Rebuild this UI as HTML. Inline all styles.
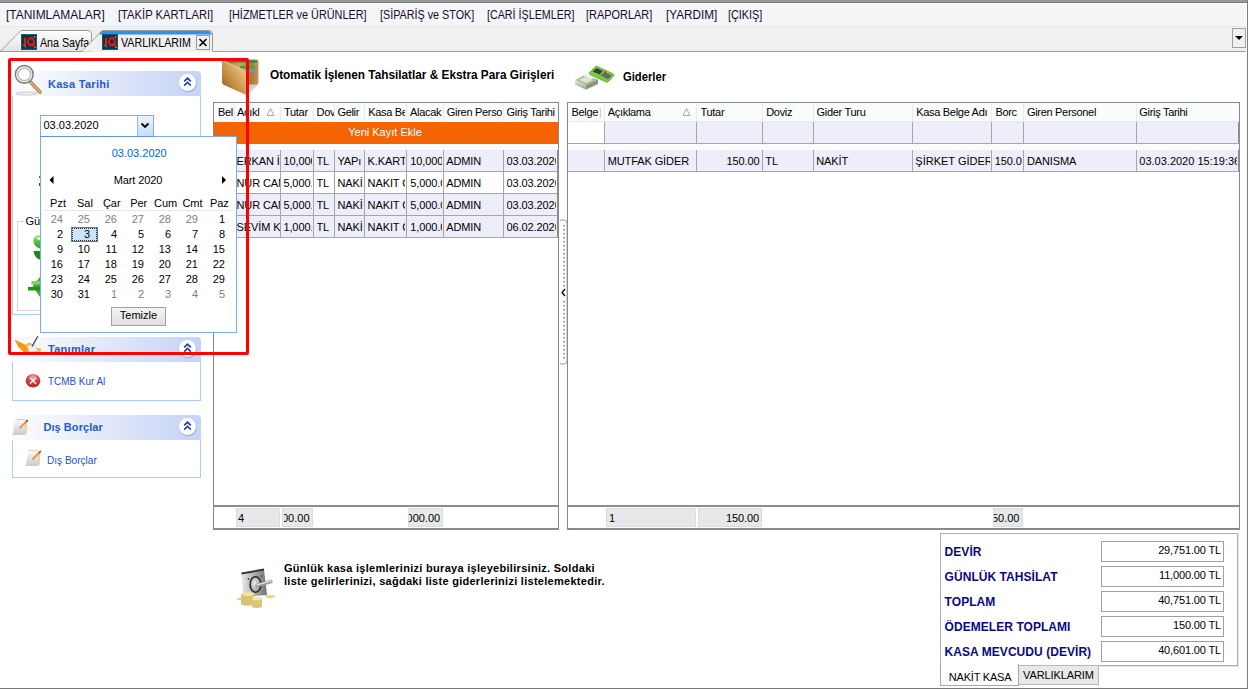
<!DOCTYPE html>
<html><head><meta charset="utf-8">
<style>
*{margin:0;padding:0;box-sizing:border-box}
html,body{width:1248px;height:689px;overflow:hidden;background:#fff;font-family:"Liberation Sans",sans-serif;font-size:11px;color:#000}
.a{position:absolute}
.t{position:absolute;white-space:nowrap;font-size:11px;line-height:13px}
.t12{position:absolute;white-space:nowrap;font-size:12px;line-height:14px}
.b{font-weight:bold}
.hl{position:absolute;height:1px}
.vl{position:absolute;width:1px}
</style></head><body>
<!-- window borders -->
<div class="a" style="left:0;top:0;width:1248px;height:2px;background:#999"></div>
<div class="a" style="left:0;top:2px;width:1248px;height:1px;background:#7c7c7c"></div>
<div class="a" style="left:1247px;top:0;width:1px;height:689px;background:#7c7c7c"></div>
<div class="a" style="left:0;top:688px;width:1248px;height:1px;background:#777"></div>
<!-- menu bar -->
<div class="a" style="left:0;top:3px;width:1246px;height:1px;background:#fff"></div>
<div class="a" style="left:0;top:4px;width:1246px;height:22px;background:#f4f5f7"></div>
<div class="a" style="left:0;top:26px;width:1246px;height:25px;background:#f0f0f0"></div>
<div class="a" style="left:0;top:51px;width:1246px;height:1px;background:#a0a0a0"></div>
<div class="a" style="left:0;top:26px;width:1246px;height:1px;background:#e6e7e9"></div>
<div id="menu" style="color:#1a0a30">
<div class="t12" style="left:6.2px;top:8.2px;transform:scaleX(0.996);transform-origin:0 0">[TANIMLAMALAR]</div>
<div class="t12" style="left:117.8px;top:8.2px;transform:scaleX(0.933);transform-origin:0 0">[TAKİP KARTLARI]</div>
<div class="t12" style="left:228.9px;top:8.2px;transform:scaleX(0.905);transform-origin:0 0">[HİZMETLER ve ÜRÜNLER]</div>
<div class="t12" style="left:379.9px;top:8.2px;transform:scaleX(0.898);transform-origin:0 0">[SİPARİŞ ve STOK]</div>
<div class="t12" style="left:486.7px;top:8.2px;transform:scaleX(0.893);transform-origin:0 0">[CARİ İŞLEMLER]</div>
<div class="t12" style="left:586.4px;top:8.2px;transform:scaleX(0.912);transform-origin:0 0">[RAPORLAR]</div>
<div class="t12" style="left:665.5px;top:8.2px;transform:scaleX(0.977);transform-origin:0 0">[YARDIM]</div>
<div class="t12" style="left:728.0px;top:8.2px;transform:scaleX(0.903);transform-origin:0 0">[ÇIKIŞ]</div>
</div>
<!-- tabs -->
<div class="a" style="left:82px;top:51px;width:131px;height:1px;background:#f0f0f0"></div>
<svg class="a" style="left:0;top:26px" width="260" height="27">
<defs><linearGradient id="tg" x1="0" y1="0" x2="0" y2="1"><stop offset="0" stop-color="#ffffff"/><stop offset="1" stop-color="#e3e3e3"/></linearGradient></defs>
<path d="M0,25.5 L21,4.5 L88,4.5 Q91.5,4.5 91.5,8 L91.5,25.5 Z" fill="url(#tg)" stroke="#9a9a9a" stroke-width="1"/>
<path d="M82,25.5 L102.5,4.5 L209,4.5 Q212.5,4.5 212.5,8 L212.5,25.5" fill="#f0f0f0" stroke="#9a9a9a" stroke-width="1"/>
<path d="M101,5 L209,5 L212,8 L212,8.5 L98,8.5 Z" fill="#2b90ef"/>
</svg>
<svg class="a" style="left:21px;top:34px" width="16" height="16">
<rect x="0.5" y="0.5" width="15" height="15" fill="#0f3444" stroke="#1a5a70"/>
<rect x="3" y="4" width="2" height="8" fill="#ff1010"/>
<ellipse cx="10" cy="7.8" rx="3" ry="3.6" fill="none" stroke="#ff1010" stroke-width="1.8"/>
<path d="M10.5,9.5 L14,12.3" stroke="#ff1010" stroke-width="1.8"/>
<path d="M2,10.5 L5,13.5" stroke="#60a888" stroke-width="1"/>
<circle cx="13.5" cy="3" r="0.8" fill="#c0a870"/><circle cx="14" cy="13.5" r="0.8" fill="#c0a870"/>
</svg>
<div class="t12" style="left:40px;top:36px;transform:scaleX(0.89);transform-origin:0 0">Ana Sayfa</div>
<svg class="a" style="left:0;top:26px" width="110" height="27"><path d="M82,25.5 L102.5,4.5" stroke="#9a9a9a" stroke-width="1" fill="none"/><path d="M82,25.5 L100,7.5 L100,25.5 Z" fill="#f0f0f0"/></svg>
<svg class="a" style="left:102px;top:34px" width="16" height="16">
<rect x="0.5" y="0.5" width="15" height="15" fill="#0f3444" stroke="#1a5a70"/>
<rect x="3" y="4" width="2" height="8" fill="#ff1010"/>
<ellipse cx="10" cy="7.8" rx="3" ry="3.6" fill="none" stroke="#ff1010" stroke-width="1.8"/>
<path d="M10.5,9.5 L14,12.3" stroke="#ff1010" stroke-width="1.8"/>
<path d="M2,10.5 L5,13.5" stroke="#60a888" stroke-width="1"/>
<circle cx="13.5" cy="3" r="0.8" fill="#c0a870"/><circle cx="14" cy="13.5" r="0.8" fill="#c0a870"/>
</svg>
<div class="t12" style="left:121px;top:36px;transform:scaleX(0.89);transform-origin:0 0">VARLIKLARIM</div>
<div class="a" style="left:196px;top:35px;width:14px;height:15px;border:1px solid #9a9a9a;background:#f2f2f2"></div>
<svg class="a" style="left:196px;top:35px" width="14" height="15"><path d="M3.5,4 L10.5,11 M10.5,4 L3.5,11" stroke="#000" stroke-width="1.6"/></svg>
<div class="a" style="left:1232px;top:28px;width:14px;height:20px;border:1px solid #a0a0a0;background:#f0f0f0"></div>
<svg class="a" style="left:1232px;top:28px" width="14" height="20"><path d="M3,8 L11,8 L7,12 Z" fill="#000"/></svg>
<!-- LEFT PANEL -->
<style>
.ph{position:absolute;left:12px;width:189px;height:25px;background:linear-gradient(to right,#fdfdff 0%,#e4eaf9 45%,#c6d3f7 100%);border-radius:0 4px 0 0}
.pb{position:absolute;left:12px;width:189px;background:#fff;border:1px solid #a8cdf8;border-top:none}
.pht{position:absolute;white-space:nowrap;font-size:11px;line-height:13px;font-weight:bold;color:#215dc6}
.cb{position:absolute;width:17px;height:17px;border-radius:50%;background:radial-gradient(circle at 50% 45%,#ffffff 60%,#eef0f6 78%,#b4bccf 100%);box-shadow:0.5px 1px 1.5px rgba(60,70,100,0.35)}
.pit{position:absolute;white-space:nowrap;font-size:11px;line-height:13px;color:#2151c9}
</style>
<!-- Kasa Tarihi -->
<div class="ph" style="top:71px"></div>
<div class="pb" style="top:96px;height:219px"></div>
<svg class="a" style="left:14px;top:63px" width="30" height="34">
<defs><radialGradient id="mg" cx="0.45" cy="0.45" r="0.6"><stop offset="0" stop-color="#ffffff"/><stop offset="0.6" stop-color="#f4f4f4"/><stop offset="1" stop-color="#d0d0d0"/></radialGradient></defs>
<ellipse cx="12.5" cy="30.5" rx="11" ry="1.6" fill="#ececec" stroke="#c4c4c4" stroke-width="0.8"/>
<path d="M17,19.5 L26,29" stroke="#a87a3a" stroke-width="3.4" stroke-linecap="round"/>
<path d="M17,19.5 L26,29" stroke="#e3b878" stroke-width="1.6" stroke-linecap="round"/>
<circle cx="10.3" cy="11.4" r="8.9" fill="url(#mg)" stroke="#7a7a7a" stroke-width="1.4"/>
<circle cx="10.3" cy="11.4" r="6.2" fill="#fff" stroke="#b8b8b8" stroke-width="1.2"/>
</svg>
<div class="pht" style="left:48px;top:78.2px;letter-spacing:0.28px">Kasa Tarihi</div>
<div class="cb" style="left:179px;top:74px"></div>
<svg class="a" style="left:179px;top:74px" width="17" height="17"><path d="M5.2,7.4 L8.5,4.1 L11.8,7.4 M5.2,11.6 L8.5,8.3 L11.8,11.6" stroke="#1a3a9a" stroke-width="1.6" fill="none"/></svg>
<!-- date edit -->
<div class="a" style="left:40px;top:115px;width:114px;height:22px;border:1px solid #7ab0ea;background:#fff"></div>
<div class="a" style="left:137px;top:116px;width:16px;height:20px;background:linear-gradient(#e9f3fd,#c6def7);border-left:1px solid #8fbdee"></div>
<svg class="a" style="left:137px;top:116px" width="16" height="20"><path d="M4.5,7.5 L8,11 L11.5,7.5" stroke="#000" stroke-width="1.8" fill="none"/></svg>
<div class="t" style="left:43.5px;top:118.7px">03.03.2020</div>
<!-- hidden controls below popup -->
<div class="a" style="left:38.5px;top:176px;width:1.5px;height:1.5px;background:#555"></div>
<div class="a" style="left:38.5px;top:183px;width:1.5px;height:2.5px;background:#444"></div>
<div class="a" style="left:17px;top:221px;width:40px;height:90px;border:1px solid #d5d5d5;border-right:none"></div>
<div class="a" style="left:24px;top:214px;width:17px;height:14px;background:#fff"></div>
<div class="t" style="left:25.5px;top:215px">Gü</div>
<svg class="a" style="left:24px;top:228px" width="16" height="72">
<defs><linearGradient id="gg" x1="0" y1="0" x2="0" y2="1"><stop offset="0" stop-color="#a0e890"/><stop offset="0.5" stop-color="#5cc040"/><stop offset="1" stop-color="#2a9a18"/></linearGradient></defs>
<path d="M16,7 C11,7 9,10 9.5,14 C10,17.5 13,19.5 16,20.5 Z" fill="url(#gg)"/>
<path d="M12.5,10 C13.5,9 15,9 16,9.5 L16,12 C14.5,11.5 13,11.5 12.5,10 Z" fill="#e8f8e0"/>
<path d="M9.5,23 L16,23 L16,31.5 C12.5,31 10,27.5 9.5,23 Z" fill="#1e8c10"/>
<path d="M16,49 L8.5,58 L16,69 Z" fill="#3cae24"/>
<rect x="7.5" y="53" width="8.5" height="3.5" fill="#7cd468"/>
<rect x="4" y="59" width="12" height="3.5" fill="#22901a"/>
</svg>
<!-- Tanimlar -->
<div class="ph" style="top:337px"></div>
<div class="pb" style="top:362px;height:39px"></div>
<svg class="a" style="left:10px;top:334px" width="36" height="30">
<path d="M4.5,5.5 L16,11 L19,18 L14,18.5 L8,12.5 Z" fill="#f49a18"/>
<path d="M15,11 L19,8.5 L22,10 L27,14 L30.5,14.5 Q32,16 30,17.5 L20,19 Z" fill="#f8ac30"/>
<path d="M17,11.5 L25,10.5 L28,17 L19.5,18 Z" fill="#e8f0f8" stroke="#c0ccd8" stroke-width="0.6"/>
<path d="M22,12.5 L27.8,2.2" stroke="#404040" stroke-width="1.3"/>
</svg>
<div class="pht" style="left:48px;top:343.3px;letter-spacing:0.28px">Tanımlar</div>
<div class="cb" style="left:179px;top:340px"></div>
<svg class="a" style="left:179px;top:340px" width="17" height="17"><path d="M5.2,7.4 L8.5,4.1 L11.8,7.4 M5.2,11.6 L8.5,8.3 L11.8,11.6" stroke="#1a3a9a" stroke-width="1.6" fill="none"/></svg>
<svg class="a" style="left:20px;top:368px" width="26" height="26">
<defs><radialGradient id="rx" cx="0.5" cy="0.25" r="0.8"><stop offset="0" stop-color="#f4b0b0"/><stop offset="0.45" stop-color="#d84848"/><stop offset="1" stop-color="#a82020"/></radialGradient></defs>
<ellipse cx="13" cy="12.8" rx="7.4" ry="6.8" fill="url(#rx)"/>
<path d="M10,9.8 L16,15.8 M16,9.8 L10,15.8" stroke="#fff" stroke-width="1.3"/>
</svg>
<div class="pit" style="left:48px;top:375.4px;transform:scaleX(0.9);transform-origin:0 0">TCMB Kur Al</div>
<!-- Dis Borclar -->
<div class="ph" style="top:415px"></div>
<div class="pb" style="top:440px;height:38px"></div>
<svg class="a" style="left:10px;top:416px" width="20" height="22">
<defs><linearGradient id="np10" x1="0" y1="0" x2="0" y2="1"><stop offset="0" stop-color="#f8f8f8"/><stop offset="1" stop-color="#c8ccd0"/></linearGradient></defs>
<path d="M15,5 L17,5.5 L16.8,17.5 L15,19 Z" fill="#e8d49a"/>
<path d="M5.5,4 L15,4 L15,19 L2.5,19 Q3.5,15 4,10 Z" fill="url(#np10)"/>
<path d="M5.5,3.6 L15,3.6" stroke="#e8d08a" stroke-width="1"/>
<path d="M9.5,12.5 L16.8,5" stroke="#f09040" stroke-width="1.8"/>
<path d="M16,5.8 L17.8,4" stroke="#d04040" stroke-width="1.8"/>
</svg>
<div class="pht" style="left:43.5px;top:421.2px;letter-spacing:0.05px">Dış Borçlar</div>
<div class="cb" style="left:179px;top:418px"></div>
<svg class="a" style="left:179px;top:418px" width="17" height="17"><path d="M5.2,7.4 L8.5,4.1 L11.8,7.4 M5.2,11.6 L8.5,8.3 L11.8,11.6" stroke="#1a3a9a" stroke-width="1.6" fill="none"/></svg>
<svg class="a" style="left:23px;top:447px" width="20" height="22">
<defs><linearGradient id="np23" x1="0" y1="0" x2="0" y2="1"><stop offset="0" stop-color="#f8f8f8"/><stop offset="1" stop-color="#c8ccd0"/></linearGradient></defs>
<path d="M15,5 L17,5.5 L16.8,17.5 L15,19 Z" fill="#e8d49a"/>
<path d="M5.5,4 L15,4 L15,19 L2.5,19 Q3.5,15 4,10 Z" fill="url(#np23)"/>
<path d="M5.5,3.6 L15,3.6" stroke="#e8d08a" stroke-width="1"/>
<path d="M9.5,12.5 L16.8,5" stroke="#f09040" stroke-width="1.8"/>
<path d="M16,5.8 L17.8,4" stroke="#d04040" stroke-width="1.8"/>
</svg>
<div class="pit" style="left:47.3px;top:453.7px;transform:scaleX(0.915);transform-origin:0 0">Dış Borçlar</div>
<!-- MIDDLE GRID -->
<style>
.gh{position:absolute;white-space:nowrap;font-size:11px;line-height:13px;overflow:hidden;color:#000;letter-spacing:-0.3px}
.gd{position:absolute;white-space:nowrap;font-size:11px;line-height:13px;overflow:hidden;color:#000;letter-spacing:-0.1px}
</style>
<div class="a" style="left:213px;top:102px;width:346px;height:428px;border:1px solid #828790;border-bottom:2px solid #868a92;background:#fff"></div>
<div class="a" style="left:214px;top:103px;width:344px;height:19px;background:#fbfcfe"></div>
<div class="a" style="left:214px;top:122px;width:344px;height:22px;background:#f46404"></div>
<div class="a" style="left:214px;top:144px;width:344px;height:6px;background:#fcfcfc"></div>
<div class="vl" style="left:234px;top:104px;height:17px;background:#e4ebf4"></div>
<div class="vl" style="left:280px;top:104px;height:17px;background:#e4ebf4"></div>
<div class="vl" style="left:313px;top:104px;height:17px;background:#e4ebf4"></div>
<div class="vl" style="left:334px;top:104px;height:17px;background:#e4ebf4"></div>
<div class="vl" style="left:364px;top:104px;height:17px;background:#e4ebf4"></div>
<div class="vl" style="left:406px;top:104px;height:17px;background:#e4ebf4"></div>
<div class="vl" style="left:443px;top:104px;height:17px;background:#e4ebf4"></div>
<div class="vl" style="left:503px;top:104px;height:17px;background:#e4ebf4"></div>
<div class="a" style="left:214px;top:150px;width:344px;height:21px;background:#eeeefa"></div>
<div class="a" style="left:214px;top:171px;width:344px;height:22px;background:#ffffff"></div>
<div class="a" style="left:214px;top:193px;width:344px;height:22px;background:#eeeefa"></div>
<div class="a" style="left:214px;top:215px;width:344px;height:22px;background:#eeeefa"></div>
<div class="hl" style="left:214px;top:171px;width:344px;background:#a6a6a6"></div>
<div class="hl" style="left:214px;top:193px;width:344px;background:#a6a6a6"></div>
<div class="hl" style="left:214px;top:215px;width:344px;background:#a6a6a6"></div>
<div class="hl" style="left:214px;top:237px;width:344px;background:#a6a6a6"></div>
<div class="vl" style="left:234px;top:150px;height:87px;background:#a6a6a6"></div>
<div class="vl" style="left:280px;top:150px;height:87px;background:#a6a6a6"></div>
<div class="vl" style="left:313px;top:150px;height:87px;background:#a6a6a6"></div>
<div class="vl" style="left:334px;top:150px;height:87px;background:#a6a6a6"></div>
<div class="vl" style="left:364px;top:150px;height:87px;background:#a6a6a6"></div>
<div class="vl" style="left:406px;top:150px;height:87px;background:#a6a6a6"></div>
<div class="vl" style="left:443px;top:150px;height:87px;background:#a6a6a6"></div>
<div class="vl" style="left:503px;top:150px;height:87px;background:#a6a6a6"></div>
<div class="vl" style="left:557px;top:150px;height:87px;width:2px;background:#8c8c8c"></div>
<div class="gh" style="left:217.9px;top:106.3px;width:15.1px">Bel</div>
<div class="gh" style="left:237px;top:106.3px;width:42.5px">Açıkl</div>
<div class="gh" style="left:284px;top:106.3px;width:28.5px">Tutar</div>
<div class="gh" style="left:316.5px;top:106.3px;width:17.0px">Doviz</div>
<div class="gh" style="left:337.4px;top:106.3px;width:26.1px">Gelir</div>
<div class="gh" style="left:368.2px;top:106.3px;width:37.3px">Kasa Be</div>
<div class="gh" style="left:410px;top:106.3px;width:32.5px">Alacak</div>
<div class="gh" style="left:446.8px;top:106.3px;width:55.7px">Giren Perso</div>
<div class="gh" style="left:506.6px;top:106.3px;width:50.4px">Giriş Tarihi</div>
<svg class="a" style="left:266px;top:107px" width="9" height="10"><path d="M4.5,1.5 L8,8.5 L1,8.5 Z" fill="none" stroke="#a8a8a8" stroke-width="1"/></svg>
<div class="gh" style="left:214px;top:126.3px;width:344px;text-align:center;color:#fff;padding-right:2px;letter-spacing:0">Yeni Kayıt Ekle</div>
<div class="gd" style="left:236.5px;top:154.8px;width:43.0px">ERKAN İ</div>
<div class="gd" style="left:283.4px;top:154.8px;width:29.1px">10,000.00</div>
<div class="gd" style="left:316.5px;top:154.8px;width:17.0px">TL</div>
<div class="gd" style="left:337.4px;top:154.8px;width:26.1px">YAPı KREDİ</div>
<div class="gd" style="left:367.6px;top:154.8px;width:37.9px">K.KART</div>
<div class="gd" style="left:410.3px;top:154.8px;width:32.2px">10,000.00</div>
<div class="gd" style="left:446.2px;top:154.8px;width:56.3px">ADMIN</div>
<div class="gd" style="left:506.6px;top:154.8px;width:49.9px">03.03.2020</div>
<div class="gd" style="left:236.5px;top:176.8px;width:43.0px">NUR CAN</div>
<div class="gd" style="left:283.4px;top:176.8px;width:29.1px">5,000.00</div>
<div class="gd" style="left:316.5px;top:176.8px;width:17.0px">TL</div>
<div class="gd" style="left:337.4px;top:176.8px;width:26.1px">NAKİT</div>
<div class="gd" style="left:367.6px;top:176.8px;width:37.9px">NAKIT ÇEKİM</div>
<div class="gd" style="left:410.3px;top:176.8px;width:32.2px">5,000.00</div>
<div class="gd" style="left:446.2px;top:176.8px;width:56.3px">ADMIN</div>
<div class="gd" style="left:506.6px;top:176.8px;width:49.9px">03.03.2020</div>
<div class="gd" style="left:236.5px;top:198.8px;width:43.0px">NUR CAN</div>
<div class="gd" style="left:283.4px;top:198.8px;width:29.1px">5,000.00</div>
<div class="gd" style="left:316.5px;top:198.8px;width:17.0px">TL</div>
<div class="gd" style="left:337.4px;top:198.8px;width:26.1px">NAKİT</div>
<div class="gd" style="left:367.6px;top:198.8px;width:37.9px">NAKIT ÇEKİM</div>
<div class="gd" style="left:410.3px;top:198.8px;width:32.2px">5,000.00</div>
<div class="gd" style="left:446.2px;top:198.8px;width:56.3px">ADMIN</div>
<div class="gd" style="left:506.6px;top:198.8px;width:49.9px">03.03.2020</div>
<div class="gd" style="left:236.5px;top:220.8px;width:43.0px">SEVİM K</div>
<div class="gd" style="left:283.4px;top:220.8px;width:29.1px">1,000.00</div>
<div class="gd" style="left:316.5px;top:220.8px;width:17.0px">TL</div>
<div class="gd" style="left:337.4px;top:220.8px;width:26.1px">NAKİT</div>
<div class="gd" style="left:367.6px;top:220.8px;width:37.9px">NAKIT ÇEKİM</div>
<div class="gd" style="left:410.3px;top:220.8px;width:32.2px">1,000.00</div>
<div class="gd" style="left:446.2px;top:220.8px;width:56.3px">ADMIN</div>
<div class="gd" style="left:506.6px;top:220.8px;width:49.9px">06.02.2020</div>
<div class="a" style="left:214px;top:505px;width:344px;height:2px;background:#8c8c8c"></div>
<div class="a" style="left:235.5px;top:508px;width:44.5px;height:19px;background:#e6e8ea;border:1px solid #dcdcdc"></div>
<div class="a" style="left:282px;top:508px;width:31px;height:19px;background:#e6e8ea;border:1px solid #dcdcdc"></div>
<div class="a" style="left:408px;top:508px;width:35px;height:19px;background:#e6e8ea;border:1px solid #dcdcdc"></div>
<div class="gd" style="left:238px;top:511.6px;width:40px">4</div>
<div class="gd" style="left:284px;top:511.6px;width:25.5px;direction:rtl;text-align:left;letter-spacing:0"><span style="direction:ltr;unicode-bidi:bidi-override">21,000.00</span></div>
<div class="gd" style="left:409px;top:511.6px;width:31.2px;direction:rtl;text-align:left;letter-spacing:0"><span style="direction:ltr;unicode-bidi:bidi-override">21,000.00</span></div>
<!-- RIGHT GRID -->
<div class="a" style="left:567px;top:102px;width:673px;height:428px;border:1px solid #828790;border-bottom:2px solid #868a92;background:#fff"></div>
<div class="a" style="left:568px;top:103px;width:671px;height:19px;background:#fbfcfe;border-bottom:1px solid #e2e9f3"></div>
<div class="a" style="left:605px;top:122px;width:634px;height:21px;background:#eeeefa"></div>
<div class="hl" style="left:568px;top:143px;width:671px;background:#a6a6a6"></div>
<div class="a" style="left:568px;top:144px;width:671px;height:6px;background:#fcfcfc"></div>
<div class="a" style="left:568px;top:150px;width:671px;height:21px;background:#eeeefa"></div>
<div class="hl" style="left:568px;top:171px;width:671px;background:#a6a6a6"></div>
<div class="vl" style="left:604px;top:104px;height:17px;background:#e4ebf4"></div>
<div class="vl" style="left:604px;top:122px;height:21px;background:#a6a6a6"></div>
<div class="vl" style="left:604px;top:150px;height:21px;background:#a6a6a6"></div>
<div class="vl" style="left:696px;top:104px;height:17px;background:#e4ebf4"></div>
<div class="vl" style="left:696px;top:122px;height:21px;background:#a6a6a6"></div>
<div class="vl" style="left:696px;top:150px;height:21px;background:#a6a6a6"></div>
<div class="vl" style="left:762px;top:104px;height:17px;background:#e4ebf4"></div>
<div class="vl" style="left:762px;top:122px;height:21px;background:#a6a6a6"></div>
<div class="vl" style="left:762px;top:150px;height:21px;background:#a6a6a6"></div>
<div class="vl" style="left:813px;top:104px;height:17px;background:#e4ebf4"></div>
<div class="vl" style="left:813px;top:122px;height:21px;background:#a6a6a6"></div>
<div class="vl" style="left:813px;top:150px;height:21px;background:#a6a6a6"></div>
<div class="vl" style="left:912px;top:104px;height:17px;background:#e4ebf4"></div>
<div class="vl" style="left:912px;top:122px;height:21px;background:#a6a6a6"></div>
<div class="vl" style="left:912px;top:150px;height:21px;background:#a6a6a6"></div>
<div class="vl" style="left:991px;top:104px;height:17px;background:#e4ebf4"></div>
<div class="vl" style="left:991px;top:122px;height:21px;background:#a6a6a6"></div>
<div class="vl" style="left:991px;top:150px;height:21px;background:#a6a6a6"></div>
<div class="vl" style="left:1023px;top:104px;height:17px;background:#e4ebf4"></div>
<div class="vl" style="left:1023px;top:122px;height:21px;background:#a6a6a6"></div>
<div class="vl" style="left:1023px;top:150px;height:21px;background:#a6a6a6"></div>
<div class="vl" style="left:1136px;top:104px;height:17px;background:#e4ebf4"></div>
<div class="vl" style="left:1136px;top:122px;height:21px;background:#a6a6a6"></div>
<div class="vl" style="left:1136px;top:150px;height:21px;background:#a6a6a6"></div>
<div class="gh" style="left:571.5px;top:106.3px;width:32.0px">Belge</div>
<div class="gh" style="left:607.7px;top:106.3px;width:87.8px">Açıklama</div>
<div class="gh" style="left:700.5px;top:106.3px;width:61.0px">Tutar</div>
<div class="gh" style="left:766.2px;top:106.3px;width:46.3px">Doviz</div>
<div class="gh" style="left:816.5px;top:106.3px;width:95.0px">Gider Turu</div>
<div class="gh" style="left:916.2px;top:106.3px;width:74.3px">Kasa Belge Adı</div>
<div class="gh" style="left:995.4px;top:106.3px;width:27.1px">Borc</div>
<div class="gh" style="left:1026.9px;top:106.3px;width:108.6px">Giren Personel</div>
<div class="gh" style="left:1139.3px;top:106.3px;width:99.2px">Giriş Tarihi</div>
<div class="vl" style="left:600px;top:108px;height:10px;background:#f0c890"></div>
<div class="a" style="left:1238px;top:122px;width:2px;height:21px;background:#8c8c8c"></div>
<div class="a" style="left:1238px;top:150px;width:2px;height:21px;background:#8c8c8c"></div>
<svg class="a" style="left:682px;top:107px" width="9" height="10"><path d="M4.5,1.5 L8,8.5 L1,8.5 Z" fill="none" stroke="#a8a8a8" stroke-width="1"/></svg>
<div class="gd" style="left:607.7px;top:154.8px;width:87.8px">MUTFAK GİDER</div>
<div class="gd" style="left:697.5px;top:154.8px;width:62.0px;text-align:right">150.00</div>
<div class="gd" style="left:765.3px;top:154.8px;width:47.2px">TL</div>
<div class="gd" style="left:816.2px;top:154.8px;width:95.3px">NAKİT</div>
<div class="gd" style="left:915.3px;top:154.8px;width:75.2px;letter-spacing:0">ŞİRKET GİDERLERİ</div>
<div class="gd" style="left:994.8px;top:154.8px;width:27.7px">150.00</div>
<div class="gd" style="left:1026.9px;top:154.8px;width:108.6px">DANISMA</div>
<div class="gd" style="left:1139.3px;top:154.8px;width:98.2px;letter-spacing:0">03.03.2020 15:19:36</div>
<div class="a" style="left:568px;top:505px;width:671px;height:2px;background:#8c8c8c"></div>
<div class="a" style="left:606px;top:508px;width:90px;height:19px;background:#e6e8ea;border:1px solid #dcdcdc"></div>
<div class="a" style="left:698px;top:508px;width:64px;height:19px;background:#e6e8ea;border:1px solid #dcdcdc"></div>
<div class="a" style="left:993px;top:508px;width:30px;height:19px;background:#e6e8ea;border:1px solid #dcdcdc"></div>
<div class="gd" style="left:609px;top:511.6px;width:80px">1</div>
<div class="gd" style="left:699px;top:511.6px;width:60px;text-align:right">150.00</div>
<div class="gd" style="left:994px;top:511.6px;width:25.5px;direction:rtl;text-align:left;letter-spacing:0"><span style="direction:ltr;unicode-bidi:bidi-override">150.00</span></div>
<svg class="a" style="left:559px;top:219px" width="9" height="146">
<path d="M1,1 L5,1 Q8,1 8,4 L8,142 Q8,145 5,145 L1,145" fill="#fff" stroke="#9a9a9a" stroke-width="1"/>
<path d="M5,6 L5,68 M5,82 L5,140" stroke="#6a6a6a" stroke-width="1.4" stroke-dasharray="1.4,2.6"/>
<path d="M6,70 L3,73.5 L6,77" stroke="#000" stroke-width="1.3" fill="none"/>
</svg>
<!-- titles -->
<div class="t12 b" style="left:269.7px;top:67.8px;transform:scaleX(0.983);transform-origin:0 0">Otomatik İşlenen Tahsilatlar &amp; Ekstra Para Girişleri</div>
<div class="t12 b" style="left:622.8px;top:69.6px;transform:scaleX(0.935);transform-origin:0 0">Giderler</div>
<svg class="a" style="left:218px;top:56px" width="44" height="44">
<defs>
<linearGradient id="wb" x1="0" y1="0" x2="1" y2="0"><stop offset="0" stop-color="#a87438"/><stop offset="0.5" stop-color="#d2a060"/><stop offset="0.8" stop-color="#a8783c"/><stop offset="1" stop-color="#c89858"/></linearGradient>
<linearGradient id="wf" x1="0" y1="1" x2="1" y2="0"><stop offset="0" stop-color="#7c5220"/><stop offset="0.35" stop-color="#c08840"/><stop offset="0.8" stop-color="#e8c27c"/><stop offset="1" stop-color="#d8a860"/></linearGradient>
</defs>
<path d="M28,28 L41,28 L28,40 Z" fill="#d4d4d4"/>
<rect x="4.2" y="3.6" width="36.3" height="25" rx="2" fill="url(#wb)"/>
<rect x="9" y="4.5" width="30" height="2" fill="#2f8a4a"/>
<rect x="22" y="10" width="15" height="2.2" fill="#22b830"/>
<rect x="30" y="13.5" width="8" height="2" fill="#5a9ae8"/>
<path d="M4.2,4.6 L28.5,16 L28.5,39 L6,29 Q4.4,28 4.4,26 Z" fill="url(#wf)"/>
<path d="M5,4.6 L28.5,15.6" stroke="#f4e0b0" stroke-width="0.8"/>
</svg>
<svg class="a" style="left:570px;top:60px" width="48" height="34">
<defs><linearGradient id="mf" x1="0" y1="0" x2="0" y2="1"><stop offset="0" stop-color="#e8ecdc"/><stop offset="1" stop-color="#9aa888"/></linearGradient></defs>
<path d="M5,20 L15,14.5 L28,19.5 L28,24 L16,29.5 L5,24.5 Z" fill="#b8c4a8"/>
<path d="M5,20 L16,25 L16,29.5 L5,24.5 Z" fill="url(#mf)"/>
<path d="M16,25 L28,19.5 L28,24 L16,29.5 Z" fill="#8c9878"/>
<path d="M8,19.8 L15,16.5 L24,20 L16,23.5 Z" fill="#dfe4cc" stroke="#a4ae90" stroke-width="0.7"/>
<path d="M13,15.5 L19,12.5 L27,16 L21,19.5 Z" fill="#f0f0f0"/>
<path d="M19.5,12.5 L25.5,6.5 Q26.5,6 27.5,6.5 L43.5,14 Q44.5,15 43.5,16 L38.5,21.5 Q37.5,22.5 36,22 L20,14.5 Q19,13.5 19.5,12.5 Z" fill="#7ccc3c" stroke="#58a828" stroke-width="0.8"/>
<path d="M22.5,11.5 L26.5,8 L33,11 L29.5,14.5 Z" fill="#404040"/>
<path d="M31,15.5 L34.5,12 L42,15.5 L38,19.5 Z" fill="#686868"/>
<rect x="34" y="11.5" width="2" height="1.2" fill="#d02020"/>
<rect x="30.5" y="14.5" width="2" height="1.2" fill="#20a020"/>
</svg>
<!-- info -->
<svg class="a" style="left:232px;top:562px" width="48" height="50">
<defs>
<linearGradient id="sg" x1="0" y1="0" x2="1" y2="0"><stop offset="0" stop-color="#e8e8e8"/><stop offset="0.5" stop-color="#b0b0b0"/><stop offset="1" stop-color="#707070"/></linearGradient>
<radialGradient id="dg" cx="0.4" cy="0.4" r="0.7"><stop offset="0" stop-color="#f0f0f0"/><stop offset="1" stop-color="#909090"/></radialGradient>
</defs>
<path d="M9.5,11.5 L32,7.5 L35,33 L11,35 Z" fill="url(#sg)"/>
<path d="M9.5,11.5 L32,7.5" stroke="#383838" stroke-width="2"/>
<ellipse cx="23.5" cy="22.5" rx="6.2" ry="8.5" fill="#2a2a2a"/>
<ellipse cx="23.5" cy="22.5" rx="4.6" ry="7" fill="url(#dg)"/>
<circle cx="16.5" cy="17" r="1" fill="#505050"/><circle cx="29.5" cy="14" r="1" fill="#505050"/>
<path d="M25,23.5 L39,19.5" stroke="#9a9a9a" stroke-width="3.4" stroke-linecap="round"/>
<path d="M25,22.8 L39,18.8" stroke="#e4e4e4" stroke-width="1.2" stroke-linecap="round"/>
<ellipse cx="8" cy="37" rx="3" ry="1.3" fill="#e4d284"/>
<ellipse cx="38" cy="34.5" rx="5" ry="1.8" fill="#e8d888"/>
<path d="M9,32 L22,32 L22,42.5 Q15.5,45 9,42.5 Z" fill="#d8c274"/>
<ellipse cx="15.5" cy="32" rx="6.5" ry="2" fill="#f0e4a0"/>
<path d="M20,36.5 L30,36.5 L30,45 Q25,47 20,45 Z" fill="#dcc676"/>
<ellipse cx="25" cy="36.5" rx="5" ry="1.8" fill="#f2e6a4"/>
</svg>
<div class="t b" style="left:284px;top:562.4px;letter-spacing:0.29px">Günlük kasa işlemlerinizi buraya işleyebilirsiniz. Soldaki</div>
<div class="t b" style="left:284px;top:575px;letter-spacing:0.28px">liste gelirlerinizi, sağdaki liste giderlerinizi listelemektedir.</div>
<!-- summary -->
<div class="a" style="left:940px;top:533px;width:298px;height:133px;border:1px solid #acacac;box-shadow:1px 1px 0 #e8e8e8"></div>
<div class="t12 b" style="left:944.6px;top:544.8px;color:#0a0a80;letter-spacing:0.05px">DEVİR</div>
<div class="a" style="left:1101px;top:541px;width:123px;height:21px;border:1px solid #a0a0a0;background:#fff"></div>
<div class="t" style="left:1102px;top:544.4px;width:119px;text-align:right;letter-spacing:-0.15px">29,751.00 TL</div>
<div class="t12 b" style="left:944.6px;top:569.8px;color:#0a0a80;letter-spacing:0.05px">GÜNLÜK TAHSİLAT</div>
<div class="a" style="left:1101px;top:566px;width:123px;height:21px;border:1px solid #a0a0a0;background:#fff"></div>
<div class="t" style="left:1102px;top:569.4px;width:119px;text-align:right;letter-spacing:-0.15px">11,000.00 TL</div>
<div class="t12 b" style="left:944.6px;top:594.8px;color:#0a0a80;letter-spacing:0.05px">TOPLAM</div>
<div class="a" style="left:1101px;top:591px;width:123px;height:21px;border:1px solid #a0a0a0;background:#fff"></div>
<div class="t" style="left:1102px;top:594.4px;width:119px;text-align:right;letter-spacing:-0.15px">40,751.00 TL</div>
<div class="t12 b" style="left:944.6px;top:619.8px;color:#0a0a80;letter-spacing:0.05px">ÖDEMELER TOPLAMI</div>
<div class="a" style="left:1101px;top:616px;width:123px;height:21px;border:1px solid #a0a0a0;background:#fff"></div>
<div class="t" style="left:1102px;top:619.4px;width:119px;text-align:right;letter-spacing:-0.15px">150.00 TL</div>
<div class="t12 b" style="left:944.6px;top:644.8px;color:#0a0a80;letter-spacing:0.05px">KASA MEVCUDU (DEVİR)</div>
<div class="a" style="left:1101px;top:641px;width:123px;height:21px;border:1px solid #a0a0a0;background:#fff"></div>
<div class="t" style="left:1102px;top:644.4px;width:119px;text-align:right;letter-spacing:-0.15px">40,601.00 TL</div>
<div class="a" style="left:940px;top:664px;width:79px;height:22px;background:#fff;border-left:1px solid #a8a8a8;border-bottom:1px solid #a8a8a8;border-right:1px solid #a8a8a8"></div>
<div class="a" style="left:1019px;top:665px;width:80px;height:20px;background:#e8e8e8;border:1px solid #b8b8b8;border-left:none"></div>
<div class="t" style="left:948.8px;top:671.1px;letter-spacing:-0.2px">NAKİT KASA</div>
<div class="t" style="left:1023px;top:669.3px;letter-spacing:-0.1px">VARLIKLARIM</div>
<!-- POPUP CALENDAR -->
<div class="a" style="left:40px;top:136px;width:197px;height:197px;border:1px solid #78acea;background:#fff"></div>
<div class="a" style="left:40px;top:136px;width:114px;height:1px;background:#5c98e4"></div>
<div class="t" style="left:111.7px;top:147.4px;color:#0064d4">03.03.2020</div>
<svg class="a" style="left:48px;top:175px" width="8" height="10"><path d="M5.5,1 L1.5,5 L5.5,9 Z" fill="#000"/></svg>
<svg class="a" style="left:220px;top:175px" width="8" height="10"><path d="M2,1 L6,5 L2,9 Z" fill="#000"/></svg>
<div class="t" style="left:113.7px;top:173.5px;letter-spacing:-0.1px">Mart 2020</div>
<div class="hl" style="left:44px;top:210px;width:189px;background:#e8e8e8"></div>
<div class="a" style="left:71px;top:227px;width:27px;height:15px;background:#cbe4f7;border:1px solid #3c7fd9"></div>
<div class="a" style="left:72px;top:228px;width:25px;height:13px;border:1px dotted #303030"></div>
<div class="t" style="left:38.0px;top:196.5px;width:40px;text-align:center">Pzt</div>
<div class="t" style="left:64.9px;top:196.5px;width:40px;text-align:center">Sal</div>
<div class="t" style="left:91.8px;top:196.5px;width:40px;text-align:center">Çar</div>
<div class="t" style="left:118.7px;top:196.5px;width:40px;text-align:center">Per</div>
<div class="t" style="left:145.6px;top:196.5px;width:40px;text-align:center">Cum</div>
<div class="t" style="left:172.5px;top:196.5px;width:40px;text-align:center">Cmt</div>
<div class="t" style="left:199.4px;top:196.5px;width:40px;text-align:center">Paz</div>
<div class="t" style="left:33px;top:213.2px;width:30px;text-align:right;color:#808080">24</div>
<div class="t" style="left:60px;top:213.2px;width:30px;text-align:right;color:#808080">25</div>
<div class="t" style="left:87px;top:213.2px;width:30px;text-align:right;color:#808080">26</div>
<div class="t" style="left:114px;top:213.2px;width:30px;text-align:right;color:#808080">27</div>
<div class="t" style="left:141px;top:213.2px;width:30px;text-align:right;color:#808080">28</div>
<div class="t" style="left:168px;top:213.2px;width:30px;text-align:right;color:#808080">29</div>
<div class="t" style="left:195px;top:213.2px;width:30px;text-align:right;color:#000">1</div>
<div class="t" style="left:33px;top:228.2px;width:30px;text-align:right;color:#000">2</div>
<div class="t" style="left:60px;top:228.2px;width:30px;text-align:right;color:#000">3</div>
<div class="t" style="left:87px;top:228.2px;width:30px;text-align:right;color:#000">4</div>
<div class="t" style="left:114px;top:228.2px;width:30px;text-align:right;color:#000">5</div>
<div class="t" style="left:141px;top:228.2px;width:30px;text-align:right;color:#000">6</div>
<div class="t" style="left:168px;top:228.2px;width:30px;text-align:right;color:#000">7</div>
<div class="t" style="left:195px;top:228.2px;width:30px;text-align:right;color:#000">8</div>
<div class="t" style="left:33px;top:243.2px;width:30px;text-align:right;color:#000">9</div>
<div class="t" style="left:60px;top:243.2px;width:30px;text-align:right;color:#000">10</div>
<div class="t" style="left:87px;top:243.2px;width:30px;text-align:right;color:#000">11</div>
<div class="t" style="left:114px;top:243.2px;width:30px;text-align:right;color:#000">12</div>
<div class="t" style="left:141px;top:243.2px;width:30px;text-align:right;color:#000">13</div>
<div class="t" style="left:168px;top:243.2px;width:30px;text-align:right;color:#000">14</div>
<div class="t" style="left:195px;top:243.2px;width:30px;text-align:right;color:#000">15</div>
<div class="t" style="left:33px;top:258.2px;width:30px;text-align:right;color:#000">16</div>
<div class="t" style="left:60px;top:258.2px;width:30px;text-align:right;color:#000">17</div>
<div class="t" style="left:87px;top:258.2px;width:30px;text-align:right;color:#000">18</div>
<div class="t" style="left:114px;top:258.2px;width:30px;text-align:right;color:#000">19</div>
<div class="t" style="left:141px;top:258.2px;width:30px;text-align:right;color:#000">20</div>
<div class="t" style="left:168px;top:258.2px;width:30px;text-align:right;color:#000">21</div>
<div class="t" style="left:195px;top:258.2px;width:30px;text-align:right;color:#000">22</div>
<div class="t" style="left:33px;top:273.2px;width:30px;text-align:right;color:#000">23</div>
<div class="t" style="left:60px;top:273.2px;width:30px;text-align:right;color:#000">24</div>
<div class="t" style="left:87px;top:273.2px;width:30px;text-align:right;color:#000">25</div>
<div class="t" style="left:114px;top:273.2px;width:30px;text-align:right;color:#000">26</div>
<div class="t" style="left:141px;top:273.2px;width:30px;text-align:right;color:#000">27</div>
<div class="t" style="left:168px;top:273.2px;width:30px;text-align:right;color:#000">28</div>
<div class="t" style="left:195px;top:273.2px;width:30px;text-align:right;color:#000">29</div>
<div class="t" style="left:33px;top:288.2px;width:30px;text-align:right;color:#000">30</div>
<div class="t" style="left:60px;top:288.2px;width:30px;text-align:right;color:#000">31</div>
<div class="t" style="left:87px;top:288.2px;width:30px;text-align:right;color:#808080">1</div>
<div class="t" style="left:114px;top:288.2px;width:30px;text-align:right;color:#808080">2</div>
<div class="t" style="left:141px;top:288.2px;width:30px;text-align:right;color:#808080">3</div>
<div class="t" style="left:168px;top:288.2px;width:30px;text-align:right;color:#808080">4</div>
<div class="t" style="left:195px;top:288.2px;width:30px;text-align:right;color:#808080">5</div>
<div class="a" style="left:111px;top:307px;width:55px;height:19px;border:1px solid #a0a0a0;background:linear-gradient(#f4f4f4,#e0e0e0)"></div>
<div class="t" style="left:111px;top:308.8px;width:55px;text-align:center">Temizle</div>
<!-- RED RECT -->
<div class="a" style="left:8px;top:58px;width:241px;height:297px;border:3px solid #ff0000;border-radius:2px"></div>
</body></html>
